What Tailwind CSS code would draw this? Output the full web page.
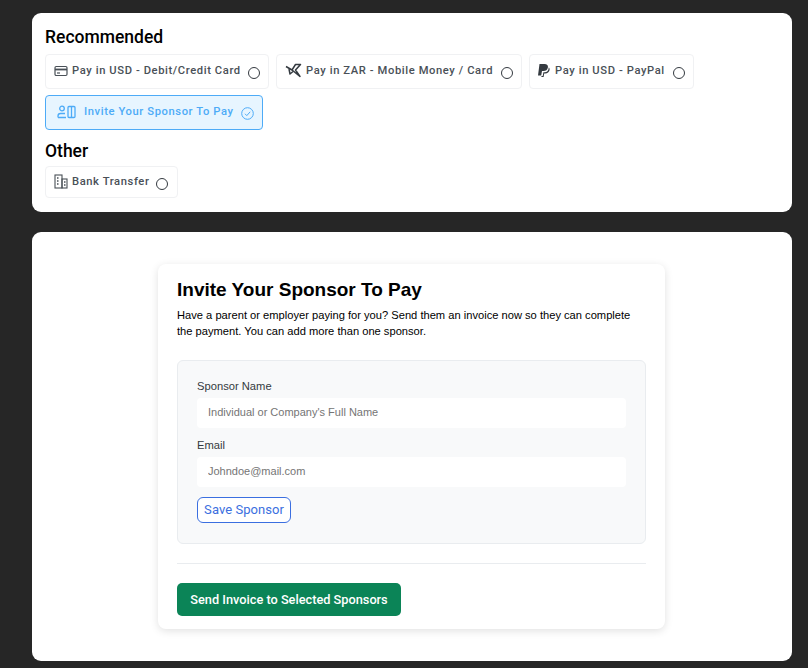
<!DOCTYPE html>
<html lang="en">
<head>
    <meta charset="UTF-8">
    <meta name="viewport" content="width=device-width, initial-scale=1.0">
    <title>Invite Your Sponsor To Pay</title>
    <script src="https://cdn.jsdelivr.net/npm/@tailwindcss/browser@4"></script>
</head>
<body class="h-[668px] overflow-hidden bg-[#262626] font-['Roboto',sans-serif]">
    <div class="pt-[13px] pl-[32px] pr-[16px] flex flex-col gap-[20px]">

        <!-- payment methods -->
        <section class="h-[199px] bg-white rounded-[9px] px-[13px] pt-[12px]">
            <h2 class="text-[17.5px] leading-[24px] font-medium text-black">Recommended</h2>
            <div class="mt-[5px] flex flex-wrap gap-x-[7px] gap-y-[6px]">
                <label class="h-[35px] w-[224px] flex items-center pl-[8px] pb-[2px] border border-[#f0f1f3] rounded-[4px] text-[#495057] text-[11.2px] font-medium tracking-[0.6px]">
                    <svg class="w-[14px] h-[14px] shrink-0" viewBox="0 0 14 14" fill="none" stroke="#495057" stroke-width="1.2"><rect x="1" y="2.5" width="12" height="9" rx="1.2"/><path d="M1 5.5h12" stroke-width="1.8"/><path d="M3 9h3"/></svg>
                    <span class="ml-[4px] mt-[2px] whitespace-nowrap">Pay in USD - Debit/Credit Card</span>
                    <span class="ml-[7px] mt-[4px] w-[12px] h-[12px] rounded-full border border-[#343a40] shrink-0"></span>
                </label>
                <label class="h-[35px] w-[246px] flex items-center pl-[8px] pb-[2px] border border-[#f0f1f3] rounded-[4px] text-[#495057] text-[11.2px] font-medium tracking-[0.6px]">
                    <svg class="w-[17px] h-[15px] shrink-0" viewBox="0 0 17 15" fill="none" stroke="#343a40" stroke-width="1.5" stroke-linejoin="round"><path d="M1 3.500 7 7l3.500-5.500 5 0-5 5.500 4.500 6.500L7 7"/><path d="M4 6 5 11l3-2.500"/></svg>
                    <span class="ml-[4px] mt-[2px] whitespace-nowrap">Pay in ZAR - Mobile Money / Card</span>
                    <span class="ml-[8px] mt-[4px] w-[12px] h-[12px] rounded-full border border-[#343a40] shrink-0"></span>
                </label>
                <label class="h-[35px] w-[165px] flex items-center pl-[7px] pb-[2px] border border-[#f0f1f3] rounded-[4px] text-[#495057] text-[11.2px] font-medium tracking-[0.6px]">
                    <svg class="w-[13px] h-[15px] shrink-0" viewBox="0 0 13 15" fill="#343a40"><path d="M2.500 1H7.500c2.500 0 3.800 1.300 3.400 3.400C10.500 6.700 8.800 8 6.500 8H5L4.200 12.500H1L2.500 1Z"/><path d="M11.800 4.500c.8.700 1 1.700.7 2.800-.5 2-2 3.200-4.200 3.200H7.200L6.600 14H4.300l.3-1h1.100l.7-3.800h1.300c2.200 0 3.700-1.200 4.100-4.700Z"/></svg>
                    <span class="ml-[5px] mt-[2px] whitespace-nowrap">Pay in USD - PayPal</span>
                    <span class="ml-[8px] mt-[4px] w-[12px] h-[12px] rounded-full border border-[#343a40] shrink-0"></span>
                </label>
                <label class="h-[35px] w-[218px] flex items-center pl-[11px] pb-[2px] bg-[#e7f5ff] border border-[#4dabf7] rounded-[4px] text-[#4dabf7] text-[11.2px] font-medium tracking-[0.6px]">
                    <svg class="w-[19px] h-[14px] shrink-0" viewBox="0 0 19 14" fill="none" stroke="#4dabf7" stroke-width="1.3"><circle cx="5" cy="3.500" r="2.300"/><path d="M1 12.500v-1.500c0-1.500 1.200-2.500 2.500-2.500H8M1 12.500h8"/><rect x="11" y="1.500" width="7" height="11" rx="1"/><path d="M14.500 1.500v11"/></svg>
                    <span class="ml-[8px] mt-[2px] whitespace-nowrap">Invite Your Sponsor To Pay</span>
                    <svg class="ml-[7px] mt-[4px] w-[13px] h-[13px] shrink-0" viewBox="0 0 13 13" fill="none" stroke="#4dabf7"><circle cx="6.500" cy="6.500" r="5.800"/><path d="m4 6.800 1.800 1.800L9.200 4.800"/></svg>
                </label>
            </div>
            <h2 class="mt-[9px] text-[17.5px] leading-[24px] font-medium text-black">Other</h2>
            <div class="mt-[3px] flex">
                <label class="h-[32px] w-[133px] flex items-center pl-[8px] pb-[1px] border border-[#f0f1f3] rounded-[4px] text-[#495057] text-[11.2px] font-medium tracking-[0.6px]">
                    <svg class="w-[14px] h-[15px] shrink-0" viewBox="0 0 14 15" fill="none" stroke="#495057" stroke-width="1.1"><rect x="1" y="1" width="7" height="13"/><rect x="8" y="5" width="5" height="9"/><path d="M3 4h1.500M3 7h1.500M3 10h1.500M10 8h1.500M10 11h1.500" stroke-width="1.400"/></svg>
                    <span class="ml-[4px] mt-[2px] whitespace-nowrap">Bank Transfer</span>
                    <span class="ml-[7px] mt-[4px] w-[12px] h-[12px] rounded-full border border-[#343a40] shrink-0"></span>
                </label>
            </div>
        </section>

        <!-- sponsor form -->
        <section class="h-[429px] bg-white rounded-[9px] pt-[32px] pl-[126px]">
            <div class="w-[507px] h-[365px] bg-white rounded-[8px] shadow-[0_2px_8px_rgba(0,0,0,0.12)] px-[19px] pt-[13px] font-['Liberation_Sans',sans-serif]">
                <h1 class="text-[19px] leading-[26px] font-bold text-black">Invite Your Sponsor To Pay</h1>
                <p class="mt-[4px] text-[11.15px] leading-[16px] text-black">Have a parent or employer paying for you? Send them an invoice now so they can complete the payment. You can add more than one sponsor.</p>
                <div class="mt-[21px] h-[184px] bg-[#f8f9fa] border border-[#e9ecef] rounded-[6px] px-[19px] pt-[18px]">
                    <label class="block text-[11.2px] leading-[14px] text-[#343a40]">Sponsor Name</label>
                    <input class="mt-[5px] block w-full h-[30px] bg-white rounded-[4px] px-[11px] pb-[2px] text-[11px] placeholder-[#757575] outline-none" placeholder="Individual or Company's Full Name">
                    <label class="mt-[10px] block text-[11.2px] leading-[14px] text-[#343a40]">Email</label>
                    <input class="mt-[5px] block w-full h-[30px] bg-white rounded-[4px] px-[11px] pb-[2px] text-[11px] placeholder-[#757575] outline-none" placeholder="Johndoe@mail.com">
                    <button class="mt-[10px] h-[26px] w-[94px] bg-white border border-[#3b6fe0] rounded-[6px] text-[#3b6fe0] text-[13px] tracking-[0.05px] font-['Roboto',sans-serif]">Save Sponsor</button>
                </div>
                <hr class="mt-[19px] border-[#e9ecef]">
                <button class="mt-[19px] h-[33px] w-[224px] bg-[#0b8457] rounded-[5px] text-white text-[12.75px] font-medium font-['Roboto',sans-serif]">Send Invoice to Selected Sponsors</button>
            </div>
        </section>
    </div>
</body>
</html>
